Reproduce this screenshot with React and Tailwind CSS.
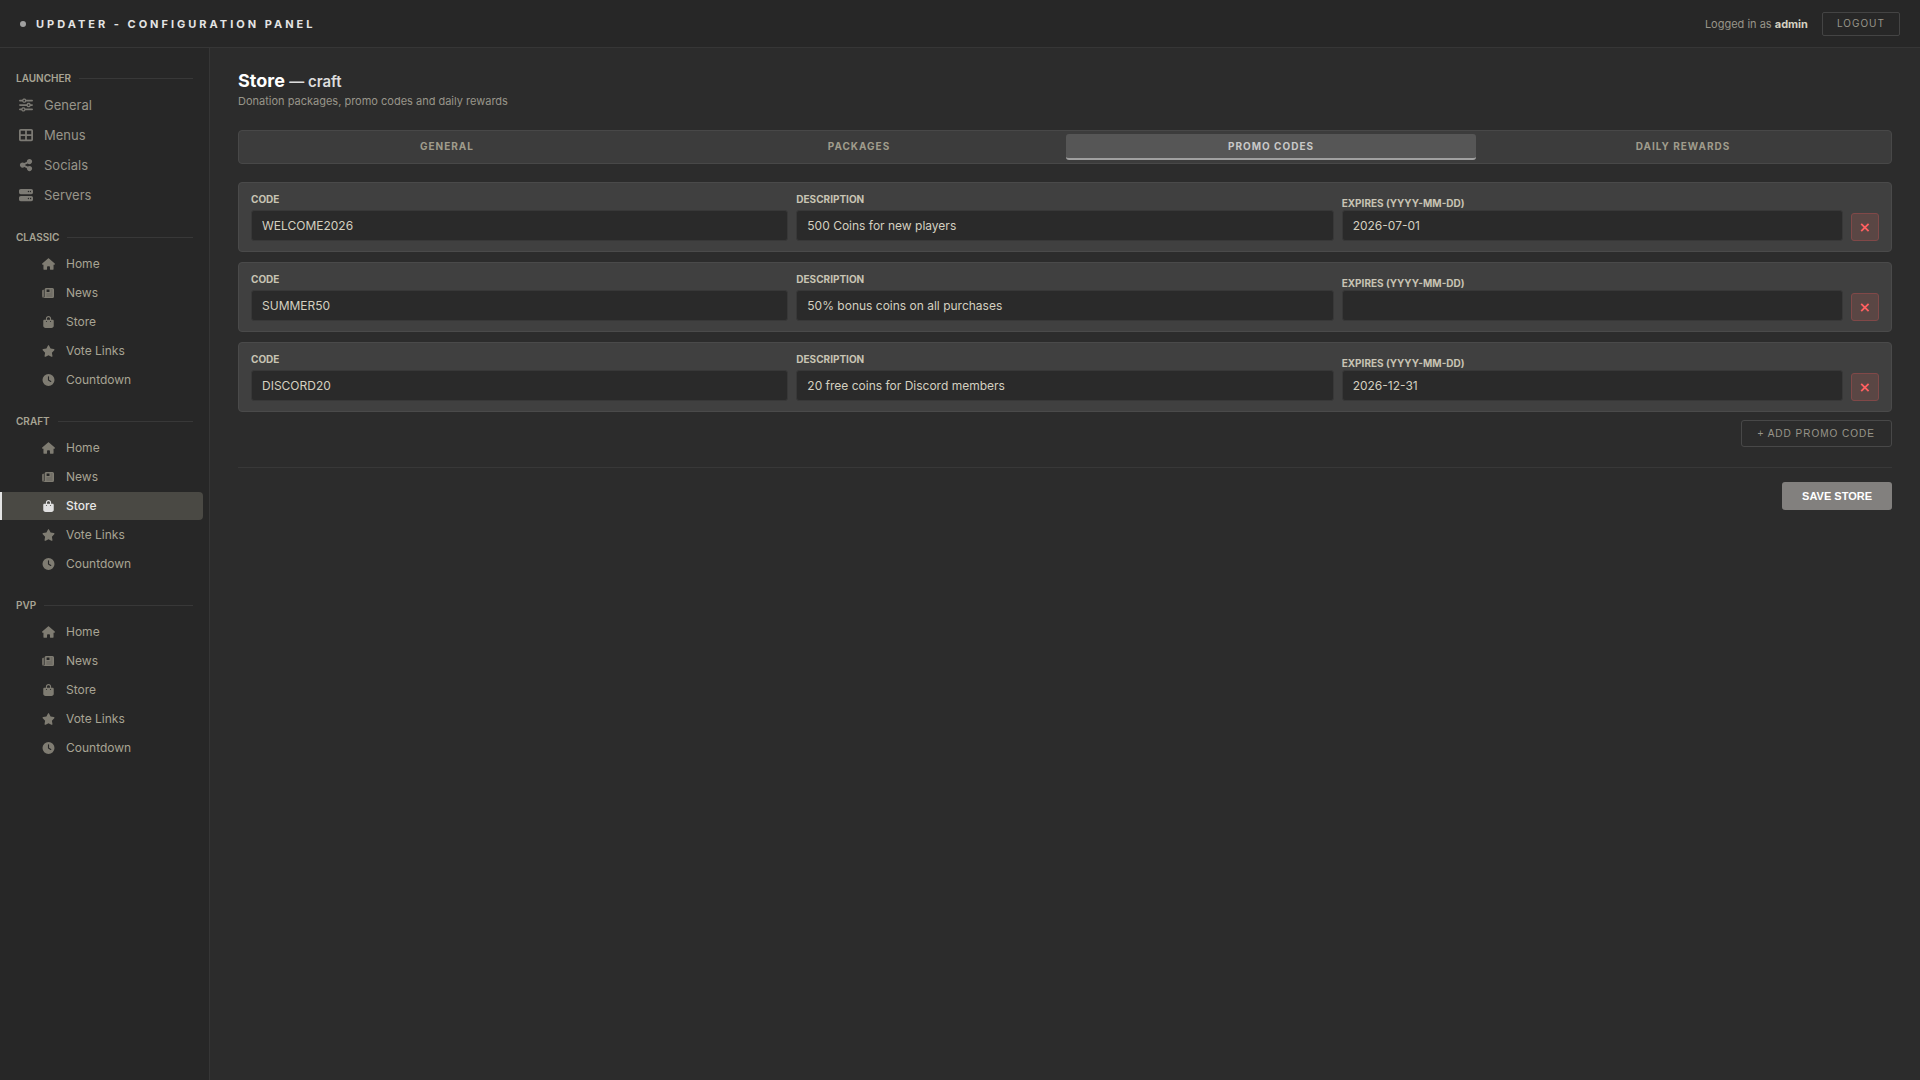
import React, { useState } from "react";
import {
  FaSliders,
  FaTableCellsLarge,
  FaShareNodes,
  FaServer,
  FaHouse,
  FaBagShopping,
  FaStar,
  FaClock,
} from "react-icons/fa6";

// solid newspaper, the text lines stay faint at small sizes
const NewsIcon = ({ className }) => (
  <svg viewBox="0 0 13 12" className={className} fill="currentColor">
    <path d="M0 4a1.3 1.3 0 0 1 1.3-1.3h.7v6.6a.5.5 0 0 1-.3.5v1.2A1.7 1.7 0 0 1 0 9.3z" fillOpacity="0.8" />
    <path
      fillRule="evenodd"
      d="M4.1.9h6.4A1.5 1.5 0 0 1 12 2.4v7.2a1.5 1.5 0 0 1-1.5 1.5H1.7c.6-.3.9-.9.9-1.5V2.4A1.5 1.5 0 0 1 4.1.9zM4.6 2.6v2.5h2.9V2.6z"
    />
    <path d="M8.6 3h1.9M8.6 5h1.9M4.4 7h6.1M4.4 9h6.1" stroke="#272727" strokeWidth="0.8" strokeOpacity="0.4" />
  </svg>
);

const launcherItems = [
  { label: "General", icon: FaSliders },
  { label: "Menus", icon: FaTableCellsLarge },
  { label: "Socials", icon: FaShareNodes },
  { label: "Servers", icon: FaServer },
];

const serverItems = [
  { label: "Home", icon: FaHouse },
  { label: "News", icon: NewsIcon },
  { label: "Store", icon: FaBagShopping },
  { label: "Vote Links", icon: FaStar },
  { label: "Countdown", icon: FaClock },
];

const servers = ["classic", "craft", "pvp"];
const tabs = ["General", "Packages", "Promo Codes", "Daily Rewards"];

const initialCodes = [
  { code: "WELCOME2026", description: "500 Coins for new players", expires: "2026-07-01" },
  { code: "SUMMER50", description: "50% bonus coins on all purchases", expires: "" },
  { code: "DISCORD20", description: "20 free coins for Discord members", expires: "2026-12-31" },
];

const labelClass = "block text-[10px] leading-[13px] font-bold uppercase text-[#c8c4b4]";
const inputClass =
  "block w-full min-w-0 h-[31px] px-[10px] rounded-[3px] border border-[#383838] bg-[#2a2a2a] text-[12px] text-[#d4d0c0] outline-none";

const SectionTitle = ({ children }) => (
  <h2 className="flex items-center gap-2 px-4 text-[10px] leading-3 font-semibold uppercase text-[#a8a494]">
    {children}
    <span className="h-px flex-1 bg-[#383838]" />
  </h2>
);

const MainLink = ({ item }) => {
  const Icon = item.icon;
  return (
    <a href="#" className="flex h-[30px] items-center gap-[11px] pl-[19px] text-[13px] leading-[21px] text-[#98958a]">
      <Icon className="w-[14px] h-[14px] text-[#7c7a74]" />
      {item.label}
    </a>
  );
};

const SubLink = ({ item, active }) => {
  const Icon = item.icon;
  return (
    <a
      href="#"
      className={
        active
          ? "flex h-7 mr-[6px] items-center gap-[11px] pl-10 rounded-r border-l-2 border-[#e4e4e4] bg-[#4a4944] text-[12px] font-medium text-[#e8e8e8]"
          : "flex h-7 mr-[6px] items-center gap-[11px] pl-10 rounded-r border-l-2 border-transparent text-[12px] text-[#a8a494]"
      }
    >
      <Icon className={active ? "w-[13px] h-3 text-[#e0e0e0]" : "w-[13px] h-3 text-[#7f7c72]"} />
      {item.label}
    </a>
  );
};

const Sidebar = () => (
  <aside className="w-[210px] shrink-0 border-r border-[#363636] bg-[#272727] pt-6">
    <nav className="flex flex-col gap-[21px]">
      <div>
        <SectionTitle>Launcher</SectionTitle>
        <div className="mt-[6px] flex flex-col">
          {launcherItems.map((item) => (
            <MainLink key={item.label} item={item} />
          ))}
        </div>
      </div>
      {servers.map((server) => (
        <div key={server}>
          <SectionTitle>{server}</SectionTitle>
          <div className="mt-[7px] flex flex-col gap-px">
            {serverItems.map((item) => (
              <SubLink key={item.label} item={item} active={server === "craft" && item.label === "Store"} />
            ))}
          </div>
        </div>
      ))}
    </nav>
  </aside>
);

const PromoRow = ({ promo, index, onChange, onRemove }) => (
  <div className="grid grid-cols-3 items-end gap-2 rounded border border-[#4a4a4a] bg-[#404040] px-3 py-[10px]">
    <div className="flex flex-col gap-1">
      <label htmlFor={`code-${index}`} className={labelClass}>Code</label>
      <input
        id={`code-${index}`}
        className={inputClass}
        value={promo.code}
        onChange={(e) => onChange("code", e.target.value)}
      />
    </div>
    <div className="flex flex-col gap-1">
      <label htmlFor={`desc-${index}`} className={labelClass}>Description</label>
      <input
        id={`desc-${index}`}
        className={inputClass}
        value={promo.description}
        onChange={(e) => onChange("description", e.target.value)}
      />
    </div>
    <div className="flex items-end gap-2">
      <div className="flex-1">
        <label htmlFor={`exp-${index}`} className={labelClass}>Expires (YYYY-MM-DD)</label>
        <input
          id={`exp-${index}`}
          className={inputClass}
          value={promo.expires}
          onChange={(e) => onChange("expires", e.target.value)}
        />
      </div>
      <button
        type="button"
        aria-label="Remove promo code"
        onClick={onRemove}
        className="flex w-7 h-7 shrink-0 items-center justify-center rounded-[3px] border border-[#804848] bg-[#5a4644] text-[#ff6060]"
      >
        <svg viewBox="0 0 10 10" className="w-[10px] h-[10px]" fill="none" stroke="currentColor" strokeWidth="1.8">
          <path d="M1.2 1.8l7.4 7.4M8.6 1.8L1.2 9.2" />
        </svg>
      </button>
    </div>
  </div>
);

const App = () => {
  const [tab, setTab] = useState("Promo Codes");
  const [codes, setCodes] = useState(initialCodes);

  const updateCode = (index, field, value) => {
    setCodes(codes.map((c, i) => (i === index ? { ...c, [field]: value } : c)));
  };

  return (
    <div className="flex min-h-screen flex-col bg-[#2c2c2c] font-[Inter,sans-serif] text-[#d4d0c0]">
      <header className="flex h-12 items-center justify-between border-b border-[#363636] bg-[#272727] px-5">
        <div className="flex items-center gap-[10px]">
          <span className="w-[6px] h-[6px] rounded-full bg-[#a0a0a0]" />
          <span className="text-[11px] leading-4 font-bold uppercase tracking-[3px] text-[#e4e4e4]">
            Updater - Configuration Panel
          </span>
        </div>
        <div className="flex items-center gap-[14px]">
          <span className="text-[11px] leading-4 text-[#98958a]">
            Logged in as <strong className="font-bold text-[#d4d0c0]">admin</strong>
          </span>
          <button
            type="button"
            className="h-6 rounded-[2px] border border-[#444444] px-[14px] text-[10px] uppercase tracking-[1px] text-[#98958a]"
          >
            Logout
          </button>
        </div>
      </header>

      <div className="flex flex-1">
        <Sidebar />
        <main className="flex-1 px-7 pt-[22px]">
          <h1 className="text-[18px] leading-[22px] font-bold text-white">
            Store <span className="text-[15px] font-semibold text-[#dcdcdc]">— craft</span>
          </h1>
          <p className="mt-px text-[11px] leading-[14px] text-[#98958a]">
            Donation packages, promo codes and daily rewards
          </p>

          <div role="tablist" className="mt-[22px] flex gap-[2px] rounded border border-[#484848] bg-[#3c3c3c] p-[3px]">
            {tabs.map((name) => (
              <button
                key={name}
                type="button"
                role="tab"
                aria-selected={tab === name}
                onClick={() => setTab(name)}
                className={
                  tab === name
                    ? "h-[26px] flex-1 rounded-[3px] border-b-2 border-[#a0a0a0] bg-[#565656] text-[10px] font-bold uppercase tracking-[1px] text-[#c8c8c8]"
                    : "h-[26px] flex-1 rounded-[3px] border-b-2 border-transparent text-[10px] font-bold uppercase tracking-[1px] text-[#a09c8c]"
                }
              >
                {name}
              </button>
            ))}
          </div>

          <div className="mt-[18px] flex flex-col gap-[10px]">
            {codes.map((promo, i) => (
              <PromoRow
                key={i}
                index={i}
                promo={promo}
                onChange={(field, value) => updateCode(i, field, value)}
                onRemove={() => setCodes(codes.filter((_, n) => n !== i))}
              />
            ))}
          </div>

          <div className="mt-2 flex justify-end">
            <button
              type="button"
              onClick={() => setCodes([...codes, { code: "", description: "", expires: "" }])}
              className="h-[27px] rounded-[3px] border border-[#484848] px-4 font-['Liberation_Sans',sans-serif] text-[10px] uppercase tracking-[1px] text-[#98958a]"
            >
              + Add Promo Code
            </button>
          </div>

          <div className="mt-5 flex justify-end border-t border-[#383838] pt-[14px]">
            <button
              type="button"
              className="h-7 rounded-[3px] bg-[#82807e] px-5 font-['Liberation_Sans',sans-serif] text-[11px] font-bold uppercase text-white"
            >
              Save Store
            </button>
          </div>
        </main>
      </div>
    </div>
  );
};

export default App;
